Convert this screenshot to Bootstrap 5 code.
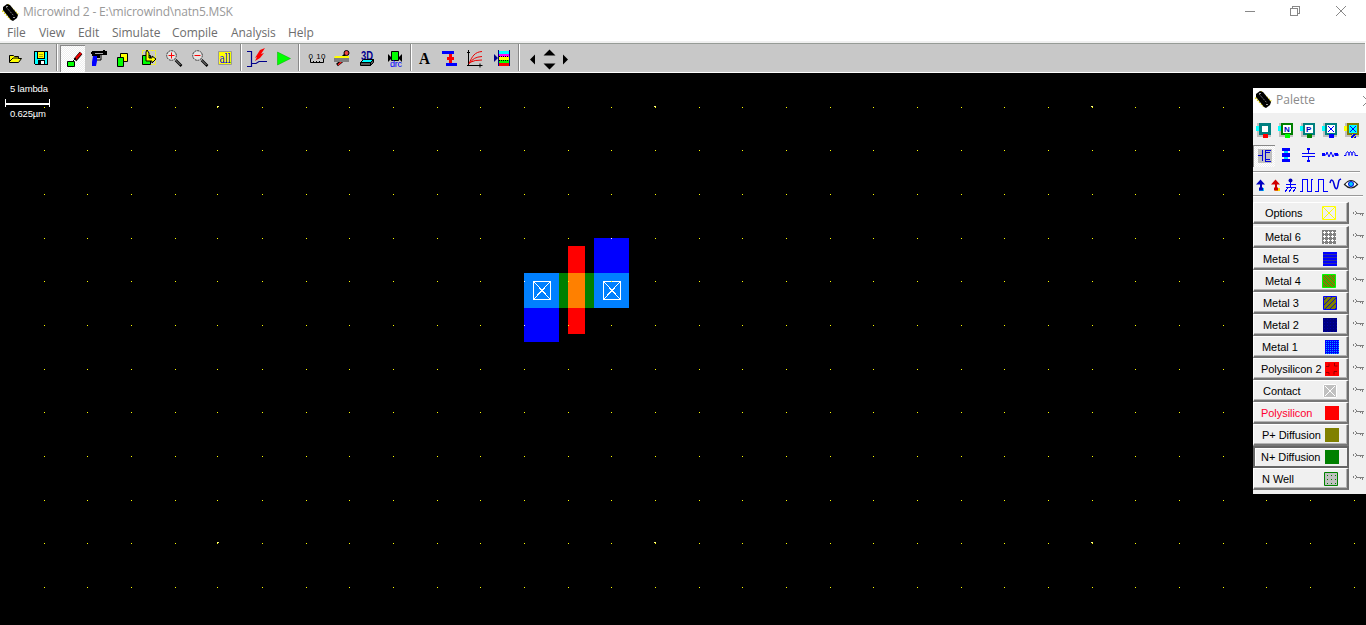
<!DOCTYPE html>
<html lang="en">
<head>
<meta charset="utf-8">
<meta name="viewport" content="width=device-width, initial-scale=1">
<title>Microwind 2</title>
<link href="https://cdn.jsdelivr.net/npm/bootstrap@5.3.0/dist/css/bootstrap.min.css" rel="stylesheet">
<style>
body{font-family:"Open Sans","Noto Sans",sans-serif;font-size:12px;line-height:16px;background:#000}
svg{display:block;flex:none}
.titlebar{height:24px;color:#999;padding-left:2px}
.titlebar .caption{letter-spacing:-.2px;margin-left:4px}
.menubar{height:17px;padding-left:7px;color:#6d6d6d}
.menubar a{color:inherit;text-decoration:none;display:block;line-height:17px;white-space:nowrap;letter-spacing:-.05px}
.toolstrip{height:32px;background:#c8c8c8;border-top:2px solid #f0f0f0;border-bottom:1px solid #fff;border-right:1px solid #fff;box-shadow:inset 0 1px #969b96;padding-top:2px}
.toolstrip button,.pal button{border:0;padding:0;background:none;display:block}
.divider{width:2px;height:27px;border-left:1px solid #888;border-right:1px solid #fff;margin:-1px 2px 0}
.pressed{background:repeating-conic-gradient(#fff 0 25%,#eee 0 50%) 0 0/2px 2px!important;box-shadow:inset 1px 1px #888}
.workspace{height:552px}
.pal{left:1253px;top:15px;width:113px;height:406px;background:#f0f0f0;overflow:hidden}
.pal-title{height:25px;background:#fff;color:#8a8a8a}
.pal-title span{margin:-2px 0 0 4px}
.pal-rule{height:2px;background:#999;border-bottom:1px solid #fff}
.layers{font:11px/20px "Liberation Sans",sans-serif;color:#000;padding-top:5px}
.layer-row{height:22px}
.pal .layer-btn{width:96px;height:22px;background:#f0f0f0;border:1px solid #fff;border-right:2px solid #6d6d6d;border-bottom:2px solid #777;box-shadow:inset -1px -1px #b4b4b4;text-align:left;white-space:nowrap}
.pal .layer-btn.chosen{border:2px solid #666;box-shadow:inset 1px 1px #fff}
.layer-btn span{letter-spacing:-.05px}
text{font-family:"Liberation Sans",sans-serif}
</style>
</head>
<body class="overflow-hidden">
<header class="bg-white">
<div class="titlebar d-flex align-items-center">
<svg width="17" height="20" viewBox="0 0 17 20" aria-hidden="true"><use href="#chip"/></svg>
<span class="caption">Microwind 2 - E:\microwind\natn5.MSK</span>
<svg class="ms-auto" width="126" height="22" viewBox="1240 0 126 22" fill="none" stroke="#888" shape-rendering="crispEdges"><path d="M1245 10.500h10M1290.500 7.500h7v7h-7zM1292.500 7v-2h7v7h-2"/><path shape-rendering="auto" d="M1336 5l10 10M1346 5l-10 10"/></svg>
</div>
<nav class="menubar d-flex" id="menu"></nav>
<div class="toolstrip d-flex" id="tools"></div>
</header>
<main class="workspace position-relative overflow-hidden">
<svg id="layout" width="1366" height="552" viewBox="0 73 1366 552" shape-rendering="crispEdges">
<path fill="#00f" d="M524 308h35v34h-35zM594 238h35v35h-35z"/>
<path fill="#f00" d="M568 246h17v88h-17z"/>
<path fill="#008000" d="M559 273h35v35h-35z"/><path fill="#ff8000" d="M568 273h17v35h-17z"/>
<path fill="#0080ff" d="M524 273h35v35h-35zM594 273h35v35h-35z"/>
<g fill="none" stroke="#fff"><path id="ct" d="M533.500 281.500h17v18h-17zM534 282l17 18M550 282l-17 18"/><use href="#ct" x="70"/>
<path d="M5.500 99v8M49.500 99v8"/><path stroke-width="2" d="M6 104h43"/></g>
<g fill="#fff" font-size="9.500"><text x="10" y="92" textLength="38">5 lambda</text><text x="10" y="117" textLength="36">0.625µm</text></g>
<g id="grid"></g>
</svg>
<aside class="pal position-absolute">
<div class="pal-title d-flex align-items-center"><svg width="19" height="22" viewBox="-2 1 19 22"><use href="#chip"/></svg><span>Palette</span>
<svg class="ms-auto" width="6" height="12" viewBox="1360 94 6 12" fill="none" stroke="#888"><path d="M1363 95l9 9M1363 105l9-9"/></svg></div>
<svg id="cells" width="113" height="32" viewBox="1253 113 113 32" shape-rendering="crispEdges"></svg>
<div class="d-flex">
<button class="pressed"><svg width="22" height="22" viewBox="1253 145 22 22" shape-rendering="crispEdges"><path fill="#c0c0c0" d="M1258 149h14v14h-14z"/><path fill="#0000e0" d="M1258 155h4v1h-4zM1262 150h1v11h-1zM1265 150h1v12h-1zM1266 150h5v1h-5zM1266 161h5v1h-5zM1266 152h4v1h-4zM1266 159h4v1h-4z"/></svg></button>
<svg width="91" height="22" viewBox="1275 145 91 22" shape-rendering="crispEdges"><path fill="#00d8ff" d="M1284 148h4v14h-4z"/><path fill="#00f" d="M1282 148h8v3h-8zM1282 153h8v4h-8zM1282 159h8v3h-8z"/>
<g fill="none" stroke="#00f"><path d="M1308.500 148v6M1302 153.500h13M1302 156.500h13M1308.500 157v5"/><path shape-rendering="auto" d="M1322 155h4l1-3 2 5 2-5 2 5 2-4 1 2h3M1344 155.500h2v-2l1.500-2 1.500 2v2-2l1.500-2 1.500 2v2-2l1.500-2 1.500 2v2h3"/></g><path fill="#00f" d="M1307 148h3v2h-3zM1307 160h3v2h-3zM1322 153h3v3h-3zM1335 153h3v3h-3z"/></svg>
</div>
<div style="padding-top:4px;width:107px"><div class="pal-rule"></div></div>
<svg width="113" height="22" viewBox="1253 173 113 22"><path fill="#0cf" d="M1259 188h5v3h-5z"/><path fill="#0000c0" d="M1256 184.500l4.500-5 4.500 5h-3v3h1v3h-4v-3h1v-3z"/><path fill="#fd0" d="M1275 188h5v3h-5z"/><path fill="#d00000" d="M1271 184.500l4.500-5 4.500 5h-3v3h1v3h-4v-3h1v-3z"/>
<g fill="none" stroke="#00f" shape-rendering="crispEdges"><path d="M1290.500 182v5M1286 184.500h10M1286 187.500h10M1288 188l-3 4M1292 188l-3 4M1296 188l-3 4"/><path d="M1300 191.500h2.500v-12h5v12h3.500v-12h2M1315 191.500h3.500v-12h5v12h4"/></g><circle cx="1290.500" cy="180.500" r="2" fill="#00b"/><path fill="none" stroke="#00d" stroke-width="1.500" d="M1330 183c1-4 3-4 4 1s3 7 4 1 1-5 3-6"/><path fill="#fff" stroke="#222" stroke-width="1.200" d="M1344.500 184.500q6.500-8 13 0-6.500 7-13 0z"/><circle cx="1351" cy="184" r="2.500" fill="#0cf" stroke="#00d"/></svg>
<div style="width:110px"><div class="pal-rule"></div></div>
<div class="layers" id="layers"></div>
</aside>
</main>
<svg width="0" height="0" class="position-absolute"><defs>
<g id="chip"><path fill="none" stroke="#d9cf00" stroke-width="2" stroke-dasharray="1.500 1.200" d="M.5 8.500l9 9.500M5.500 2.500l10.500 10"/><path fill="#000" d="M1 5l4-3 3 1 8 10-1 3-4 3-2-1L1 8z"/><path stroke="#777" stroke-dasharray="2 1" d="M4 5l8 9"/><path fill="#999" d="M4 4h2v1H4zM11 15h2v1h-2z"/></g>
<pattern id="p6" width="4" height="4" patternUnits="userSpaceOnUse"><path fill="#808080" d="M0 0h4v4H0z"/><path fill="#fff" d="M2 1h1v3H2zM1 2h3v1H1z"/></pattern>
<pattern id="p5" width="3" height="3" patternUnits="userSpaceOnUse"><path fill="#00f" d="M0 0h3v3H0z"/><path fill="#3030a0" d="M0 2h3v1H0z"/></pattern>
<pattern id="p4" width="4" height="4" patternUnits="userSpaceOnUse"><path fill="#808000" d="M0 0h4v4H0z"/><path stroke="#00d000" d="M0 0l4 4M-1 3l2 2M3-1l2 2"/></pattern>
<pattern id="p3" width="5" height="5" patternUnits="userSpaceOnUse"><path fill="#808000" d="M0 0h5v5H0z"/><path stroke="#1010c0" d="M0 5l5-5M-1 1l2-2M4 6l2-2"/></pattern>
<pattern id="p2" width="3" height="3" patternUnits="userSpaceOnUse"><path fill="#000080" d="M0 0h3v3H0z"/><path fill="#0000b0" d="M1 1h1v1H1z"/></pattern>
<pattern id="p1" width="2" height="2" patternUnits="userSpaceOnUse"><path fill="#00f" d="M0 0h2v2H0z"/><path fill="#00a0ff" d="M1 1h1v1H1z"/></pattern>
<pattern id="pw" width="4" height="4" patternUnits="userSpaceOnUse"><path fill="#c0c0c0" d="M0 0h4v4H0z"/><path fill="#008000" d="M3 3h1v1H3z"/></pattern>
</defs></svg>
<script>
const $=id=>document.getElementById(id);
// menu entries with the width each one occupies
$('menu').innerHTML=[['File',32],['View',39],['Edit',34],['Simulate',60],['Compile',59],['Analysis',57],['Help',30]]
 .map(([t,w])=>`<a href="#" style="width:${w}px">${t}</a>`).join('');

// toolbar glyphs share one coordinate space; each button takes a slice [x, width, drawing]
const zoomGlyph=(x,plus)=>`<circle cx="${x}" cy="55.500" r="4.800" fill="#e4e4e4" stroke="#333" stroke-dasharray="2 .7"/><path stroke="#f00" d="M${x-3} 55.500h6${plus?`M${x} 52.500v6`:''}"/><path stroke="#000" stroke-width="2.500" d="M${x+4} 60l6 6"/><path stroke="#ddd" stroke-width=".7" d="M${x+4} 60l5 5"/>`;
const tools=[
[2,26,'<path fill="#ff0" stroke="#000" d="M9.500 62.500v-7h4l1 1h4v2h3l-3 4zM10 61l3-3h6"/>'],
[28,26,'<g shape-rendering="crispEdges"><path fill="#0ff" stroke="#000" d="M34.500 51.500h13v13h-12l-1-1z"/><path fill="#ff0" stroke="#000" d="M37.500 51.500h7v7h-7z"/><path fill="#fff" stroke="#000" d="M38.500 60.500h6v4h-6z"/><path fill="#000" d="M39 61h2v3h-2z"/><path stroke="#aa0" d="M39 54.500h4M39 56.500h4"/></g>'],
'|',
[60,25,'<path fill="#0f0" stroke="#000" d="M67.500 61.500h7v5h-7z"/><path stroke="#000" stroke-width="3.500" d="M75 60l6-7"/><path stroke="#e00" stroke-width="2.500" d="M75.500 59l5.500-6"/><path stroke="#000" d="M72 62l4-4"/>',1],
[85,27,'<path d="M91 52h1v-1h11v-1h2v1h2v4h-7v3h-3v-2h-5v-2h-1z"/><path stroke="#aaa" d="M95 53.500h8"/><path fill="#00f" d="M93 56h4v5l-1 5h-4v-4z"/><path fill="none" stroke="#000" d="M97 60h4v-5"/>'],
[112,25,'<path fill="#ff0" stroke="#000" d="M120.500 53.500h7v8h-7z"/><path fill="#0f0" stroke="#000" d="M117.500 57.500h6v9h-6z"/>'],
[137,25,'<path fill="none" stroke="#ff0" stroke-dasharray="2 1" d="M142.500 50.500h13v14h-13z"/><path fill="#0f0" stroke="#000" d="M142.500 55.500h8v9h-8z"/><path fill="#ff0" stroke="#000" d="M146 57v-5l1-2 2 3v5h3v-2l4 3-4 4v-2h-6z"/>'],
[162,26,zoomGlyph(171.5,1)],[188,25,zoomGlyph(197.5,0)],
[213,25,'<path fill="#ff0" stroke="#999" d="M218.500 51.500h13v13h-13z"/><text x="219.500" y="63" fill="#00f" font-size="12" textLength="11" lengthAdjust="spacingAndGlyphs" style="font-family:DejaVu Serif,serif">all</text>'],
'|',
[244,26,'<path fill="none" stroke="#00008b" stroke-width="1.200" d="M247 51.500h4.500v15H247M251 63.500h5l3-2h8"/><path fill="#f00" d="M260 50l5-2-4 6 3-1-4 5-5 3 2-4-2 1z"/>'],
[270,26,'<path fill="#0f0" stroke="#00b000" stroke-width=".5" d="M277.500 52v13l13-6.500z"/>'],
'|',
[302,27,'<text x="308.500" y="59" font-size="8" textLength="17" style="font-family:Liberation Sans,sans-serif">0 10</text><path fill="none" stroke="#000" d="M310.500 59v3.500h13V59M313.500 61v1M316.500 61v1M319.500 61v1"/>'],
[329,25,'<circle cx="346.500" cy="53" r="2.500" fill="#e44" stroke="#000"/><path fill="none" stroke="#000" stroke-width="3" d="M345 55l-3 3M342 61l-5 4"/><path stroke="#f22" stroke-width="1.500" d="M342 61l-4 4"/><path fill="#ff0" d="M335 56h14v2h-15z"/><path fill="#808080" d="M334 58h15v4h-15z"/>'],
[354,25,'<text x="361" y="60" font-size="12" font-weight="bold" fill="#000090" textLength="12" lengthAdjust="spacingAndGlyphs">3D</text><path fill="#0ff" stroke="#000" d="M360.500 62.500l3-3h10l-3 3z"/><path fill="#555" stroke="#000" d="M360.500 62.500h10v3h-10zM370.500 62.500l3-3v3l-3 3z"/>'],
[379,29,'<path fill="#000" d="M388 54l4 4-4 4zM402 54l-4 4 4 4z"/><path fill="#0f0" stroke="#000" d="M391.500 51.500h7v9h-7z"/><text x="390" y="67" font-size="9" fill="#00f" textLength="12">drc</text>'],
'|',
[414,24,'<text x="419" y="64" font-size="16" font-weight="bold" textLength="11" lengthAdjust="spacingAndGlyphs" style="font-family:Liberation Serif,serif">A</text>'],
[438,24,'<path fill="#00f" d="M442 51h12v3h-12zM446 63h11v3h-11z"/><path fill="#f00" d="M449 54h3v3h2v3h-2v3h-3v-3h-2v-3h2z"/>'],
[462,28,'<path fill="none" stroke="#000" d="M468.500 50v15.500h14M467 52.500h3M480 63.500v4M467 65.500h3"/><path fill="none" stroke="#e00" d="M469 64c3-8 6-12 13-12.500M470 63q3-6 12-6.500M471 62q3-2 11-2"/>'],
[490,26,'<path fill="#008" d="M494 54l4 4-4 4zM498 50h1v16h-1zM509 50h1v16h-1z"/><path fill="#0ff" d="M499 51h10v3h-10z"/><path fill="#f0f" d="M499 54h10v3h-10z"/><path fill="#ff0" d="M499 57h10v3h-10z"/><path fill="#0f0" d="M499 60h10v3h-10z"/><path fill="#f00" d="M499 63h10v3h-10z"/><path stroke="#000" stroke-dasharray="1" d="M499 56.500h10M499 60.500h10"/>'],
'|',
[522,50,'<path d="M530 59.500l5-5v10zM568 59.500l-5-5v10zM543.500 55.500l6-6 6 6zM543.500 63.500l6 6 6-6z"/>']];
$('tools').innerHTML=tools.map(t=>t==='|'?'<span class="divider"></span>':`<button class="${t[3]?'pressed':''}"><svg width="${t[1]}" height="26" viewBox="${t[0]} 46 ${t[1]} 26">${t[2]}</svg></button>`).join('');
$('tools').style.paddingLeft='2px';

// lambda grid: every tenth point is heavier
let g='';
for(let i=0;i<31;i++)for(let j=0;j<12;j++){
 const x=Math.floor(44.03+i*43.67),y=Math.round(106.6+j*43.68);
 const white=(x===524&&(y===281||y===325))||(x===611&&y===238);
 const heavy=i%10===4&&j%10===0;
 g+=`<rect x="${x-(x===218?1:0)}" y="${y}" width="1" height="1" fill="${white?'#fff':'#ff0'}"/>`;
 if(heavy)g+=`<path fill="#ff8" d="M${x-1} ${y-1}h2v1h-2z"/>`;
}
$('grid').innerHTML=g;

// macro cell shortcuts
$('cells').innerHTML=[['#008080','#f00','#0ff',''],['#008000','#0f0','#0ff','N'],['#008080','#008000','#0ff','P'],['#008080','#00f','#0ff','X'],['#808000','#00f','#ff0','X']].map(([a,b,c,t],i)=>{
 const x=1259+i*22;
 const mark=t==='X'?`<path stroke="#00f" stroke-width="1.200" d="M${x+3} 126l6 6M${x+9} 126l-6 6"/>`:`<text x="${x+3}" y="132" font-size="8" font-weight="bold" fill="#0000c0">${t}</text>`;
 return `<path fill="#c0c0c0" d="M${x-2} 123h14v14h-14z"/><path fill="${c}" d="M${x-3} 126h5v5h-5z"/><path fill="${a}" d="M${x} 123h12v12h-12z"/><path fill="${i===4?'#0ff':'#fff'}" d="M${x+(t?2:3)} ${t?125:126}h${t?8:6}v${t?8:6}h-${t?8:6}z"/>${mark}<path fill="${b}" d="M${x+4} 134h5v4h-5z"/>${i===4?'<path stroke="#ff0" d="M1350 137l3-3M1353 138l3-3"/>':''}`}).join('');

// layer list: label, text x, swatch x, swatch drawing
const box=(f,s)=>`<path fill="${f}" ${s?`stroke="${s}"`:''} d="M.5.500h13v13H.5z"/>`;
const full=f=>`<path fill="${f}" d="M0 0h14v14H0z"/>`;
const rows=[['Options',12,69,box('#f0f0f0','#ff0')+'<path stroke="#ff0" d="M1 1l12 12M13 1L1 13"/>'],
['Metal 6',12,69,full('url(#p6)')],['Metal 5',10,70,full('url(#p5)')],['Metal 4',12,69,box('url(#p4)','#0f0')],['Metal 3',10,70,box('url(#p3)','#00f')],['Metal 2',10,70,full('url(#p2)')],['Metal 1',9,72,full('url(#p1)')],
['Polysilicon 2',8,72,full('#f00')+'<path fill="none" stroke="#900" d="M1 4.500h3v-3M9.500 1v3h3M1 10.500h3v2M12 9.500h-3v3"/>'],
['Contact',10,70,full('#c0c0c0')+'<path fill="none" stroke="#fff" d="M.5.500h13v13H.5zM2 2l10 10M12 2L2 12"/>'],
['Polysilicon',8,72,full('#f00')],['P+ Diffusion',9,72,full('#808000')],['N+ Diffusion',8,72,full('#008000')],['N Well',9,71,box('url(#pw)','#008000')]];
$('layers').innerHTML=rows.map(([t,tx,sx,s],i)=>{
 const edge=i===11?2:1;
 return `<div class="layer-row d-flex" style="margin-bottom:${i?0:2}px"><button class="layer-btn d-flex align-items-center ${i===11?'chosen':''}"><span style="width:${sx-edge}px;padding-left:${tx-edge}px;color:${i===9?'#ff0030':'#000'}">${t}</span><svg width="14" height="14">${s}</svg></button><svg width="17" height="20" viewBox="1 -1 17 20" fill="none" stroke="#808080" shape-rendering="crispEdges" style="margin-top:${i?-2:0}px"><path d="M6.500 8.500h1M6.500 11.500h1M5.500 9v2M8.500 9v2M9 10.500h7M12.500 11v1M14.500 11v2"/></svg></div>`}).join('');
</script>
<script src="https://cdn.jsdelivr.net/npm/bootstrap@5.3.0/dist/js/bootstrap.bundle.min.js"></script>
</body>
</html>
